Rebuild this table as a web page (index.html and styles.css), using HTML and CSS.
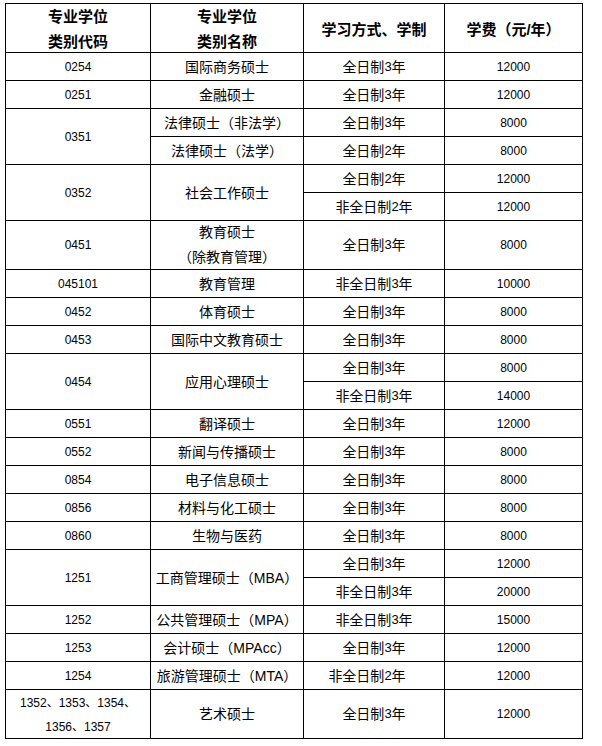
FILE: index.html
```html
<!DOCTYPE html>
<html lang="zh-CN">
<head>
<meta charset="utf-8">
<title>专业学位学费</title>
<link rel="stylesheet" href="styles.css">
</head>
<body>
<div class="grid">
  <div class="c h">专业学位<br>类别代码</div>
  <div class="c h">专业学位<br>类别名称</div>
  <div class="c h">学习方式、学制</div>
  <div class="c h">学费（元/年）</div>

  <div class="c n">0254</div><div class="c">国际商务硕士</div><div class="c">全日制<span class="d">3</span>年</div><div class="c n">12000</div>
  <div class="c n">0251</div><div class="c">金融硕士</div><div class="c">全日制<span class="d">3</span>年</div><div class="c n">12000</div>

  <div class="c n r2">0351</div><div class="c">法律硕士（非法学）</div><div class="c">全日制<span class="d">3</span>年</div><div class="c n">8000</div>
  <div class="c">法律硕士（法学）</div><div class="c">全日制<span class="d">2</span>年</div><div class="c n">8000</div>

  <div class="c n r2">0352</div><div class="c r2">社会工作硕士</div><div class="c">全日制<span class="d">2</span>年</div><div class="c n">12000</div>
  <div class="c">非全日制<span class="d">2</span>年</div><div class="c n">12000</div>

  <div class="c n">0451</div><div class="c two">教育硕士<br>（除教育管理）</div><div class="c">全日制<span class="d">3</span>年</div><div class="c n">8000</div>
  <div class="c n">045101</div><div class="c">教育管理</div><div class="c">非全日制<span class="d">3</span>年</div><div class="c n">10000</div>
  <div class="c n">0452</div><div class="c">体育硕士</div><div class="c">全日制<span class="d">3</span>年</div><div class="c n">8000</div>
  <div class="c n">0453</div><div class="c">国际中文教育硕士</div><div class="c">全日制<span class="d">3</span>年</div><div class="c n">8000</div>

  <div class="c n r2">0454</div><div class="c r2">应用心理硕士</div><div class="c">全日制<span class="d">3</span>年</div><div class="c n">8000</div>
  <div class="c">非全日制<span class="d">3</span>年</div><div class="c n">14000</div>

  <div class="c n">0551</div><div class="c">翻译硕士</div><div class="c">全日制<span class="d">3</span>年</div><div class="c n">12000</div>
  <div class="c n">0552</div><div class="c">新闻与传播硕士</div><div class="c">全日制<span class="d">3</span>年</div><div class="c n">8000</div>
  <div class="c n">0854</div><div class="c">电子信息硕士</div><div class="c">全日制<span class="d">3</span>年</div><div class="c n">8000</div>
  <div class="c n">0856</div><div class="c">材料与化工硕士</div><div class="c">全日制<span class="d">3</span>年</div><div class="c n">8000</div>
  <div class="c n">0860</div><div class="c">生物与医药</div><div class="c">全日制<span class="d">3</span>年</div><div class="c n">8000</div>

  <div class="c n r2">1251</div><div class="c r2">工商管理硕士（MBA）</div><div class="c">全日制<span class="d">3</span>年</div><div class="c n">12000</div>
  <div class="c">非全日制<span class="d">3</span>年</div><div class="c n">20000</div>

  <div class="c n">1252</div><div class="c">公共管理硕士（MPA）</div><div class="c">非全日制<span class="d">3</span>年</div><div class="c n">15000</div>
  <div class="c n">1253</div><div class="c">会计硕士（MPAcc）</div><div class="c">全日制<span class="d">3</span>年</div><div class="c n">12000</div>
  <div class="c n">1254</div><div class="c">旅游管理硕士（MTA）</div><div class="c shift">非全日制<span class="d">2</span>年</div><div class="c n">12000</div>

  <div class="c n two-n">1352、1353、1354、<br>1356、1357</div><div class="c">艺术硕士</div><div class="c">全日制<span class="d">3</span>年</div><div class="c n">12000</div>
</div>
</body>
</html>
```

FILE: styles.css
```css
html, body {
  margin: 0;
  padding: 0;
  background: #fff;
}

.grid {
  display: grid;
  width: fit-content;
  margin: 3px 0 0 5px;
  grid-template-columns: 145px 153px 141px 138px;
  grid-template-rows: 49px repeat(6, 28px) 49px repeat(15, 28px) 49px;
  border-left: 1px solid #000;
  border-top: 1px solid #000;
}

.c {
  display: flex;
  align-items: center;
  justify-content: center;
  text-align: center;
  border-right: 1px solid #000;
  border-bottom: 1px solid #000;
  color: #000;
  font-family: "Liberation Sans", "Noto Sans CJK SC", sans-serif;
  font-size: 14px;
  line-height: 20px;
  white-space: nowrap;
}

.h {
  font-size: 15px;
  font-weight: bold;
  line-height: 25px;
  padding-top: 2px;
}

.n {
  font-size: 12px;
}

.d {
  font-size: 13px;
}

.r2 {
  grid-row: span 2;
}

.two {
  line-height: 25px;
}

.two-n {
  line-height: 24px;
  padding-top: 2px;
}

.shift {
  padding-right: 14px;
}
```
